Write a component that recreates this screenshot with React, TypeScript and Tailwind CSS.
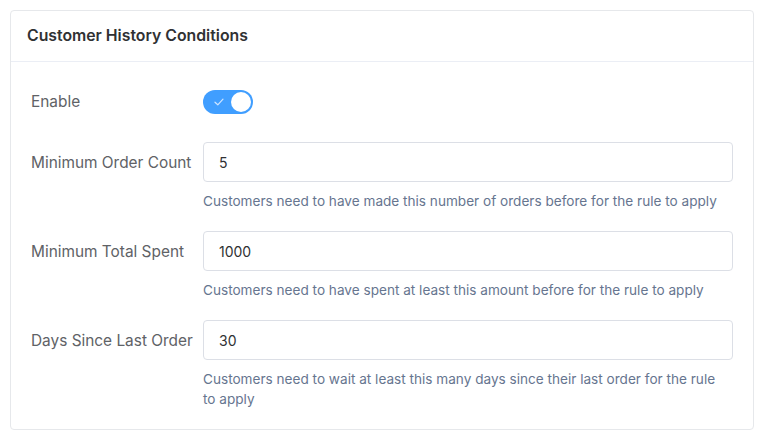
import { useState } from "react";

const FONT = { fontFamily: "Inter, 'Helvetica Neue', Arial, sans-serif" };

function Toggle({ on, onChange }: { on: boolean; onChange: (v: boolean) => void }) {
  return (
    <button
      type="button"
      onClick={() => onChange(!on)}
      className={`relative flex h-[24px] w-[50px] items-center rounded-full ${on ? "bg-[#409eff]" : "bg-[#dcdfe6]"}`}
    >
      {on && (
        <svg className="absolute left-[11px] top-[8px]" width="10" height="8" viewBox="0 0 10 8" fill="none">
          <path d="M1 4.2 L3.8 6.8 L9 1.2" stroke="#cfe5ff" strokeWidth="1.2" strokeLinecap="round" strokeLinejoin="round" />
        </svg>
      )}
      <span
        className={`absolute top-[2px] h-[20px] w-[20px] rounded-full bg-white ${on ? "left-[28px]" : "left-[2px]"}`}
      />
    </button>
  );
}

function Field({ label, value, help }: { label: string; value: string; help: string }) {
  return (
    <div className="flex">
      <div className="w-[172px] shrink-0 pt-px text-[15.4px] leading-[40px] text-[#606266]">{label}</div>
      <div className="flex-1">
        <input
          defaultValue={value}
          className="h-[40px] w-full rounded-[4px] border border-[#dcdfe6] px-[15px] text-[14px] text-[#303133] outline-none"
        />
        <div className="mt-[9px] pr-[12px] text-[13.6px] leading-[20px] text-[#66758f]">{help}</div>
      </div>
    </div>
  );
}

export default function App() {
  const [enabled, setEnabled] = useState(true);

  return (
    <div className="min-h-screen bg-white p-[10px]" style={FONT}>
      <div className="w-[744px] rounded-[4px] border border-[#e6e8eb] bg-white">
        <div className="flex h-[51px] items-center border-b border-[#ebeef5] px-[16px] text-[15.8px] font-semibold text-[#303133]">
          Customer History Conditions
        </div>
        <div className="space-y-5 px-[20px] pb-[20px] pt-[20px]">
          <div className="flex h-[40px] items-center">
            <div className="w-[172px] shrink-0 text-[15.4px] text-[#606266]">Enable</div>
            <Toggle on={enabled} onChange={setEnabled} />
          </div>
          <Field
            label="Minimum Order Count"
            value="5"
            help="Customers need to have made this number of orders before for the rule to apply"
          />
          <Field
            label="Minimum Total Spent"
            value="1000"
            help="Customers need to have spent at least this amount before for the rule to apply"
          />
          <Field
            label="Days Since Last Order"
            value="30"
            help="Customers need to wait at least this many days since their last order for the rule to apply"
          />
        </div>
      </div>
    </div>
  );
}
